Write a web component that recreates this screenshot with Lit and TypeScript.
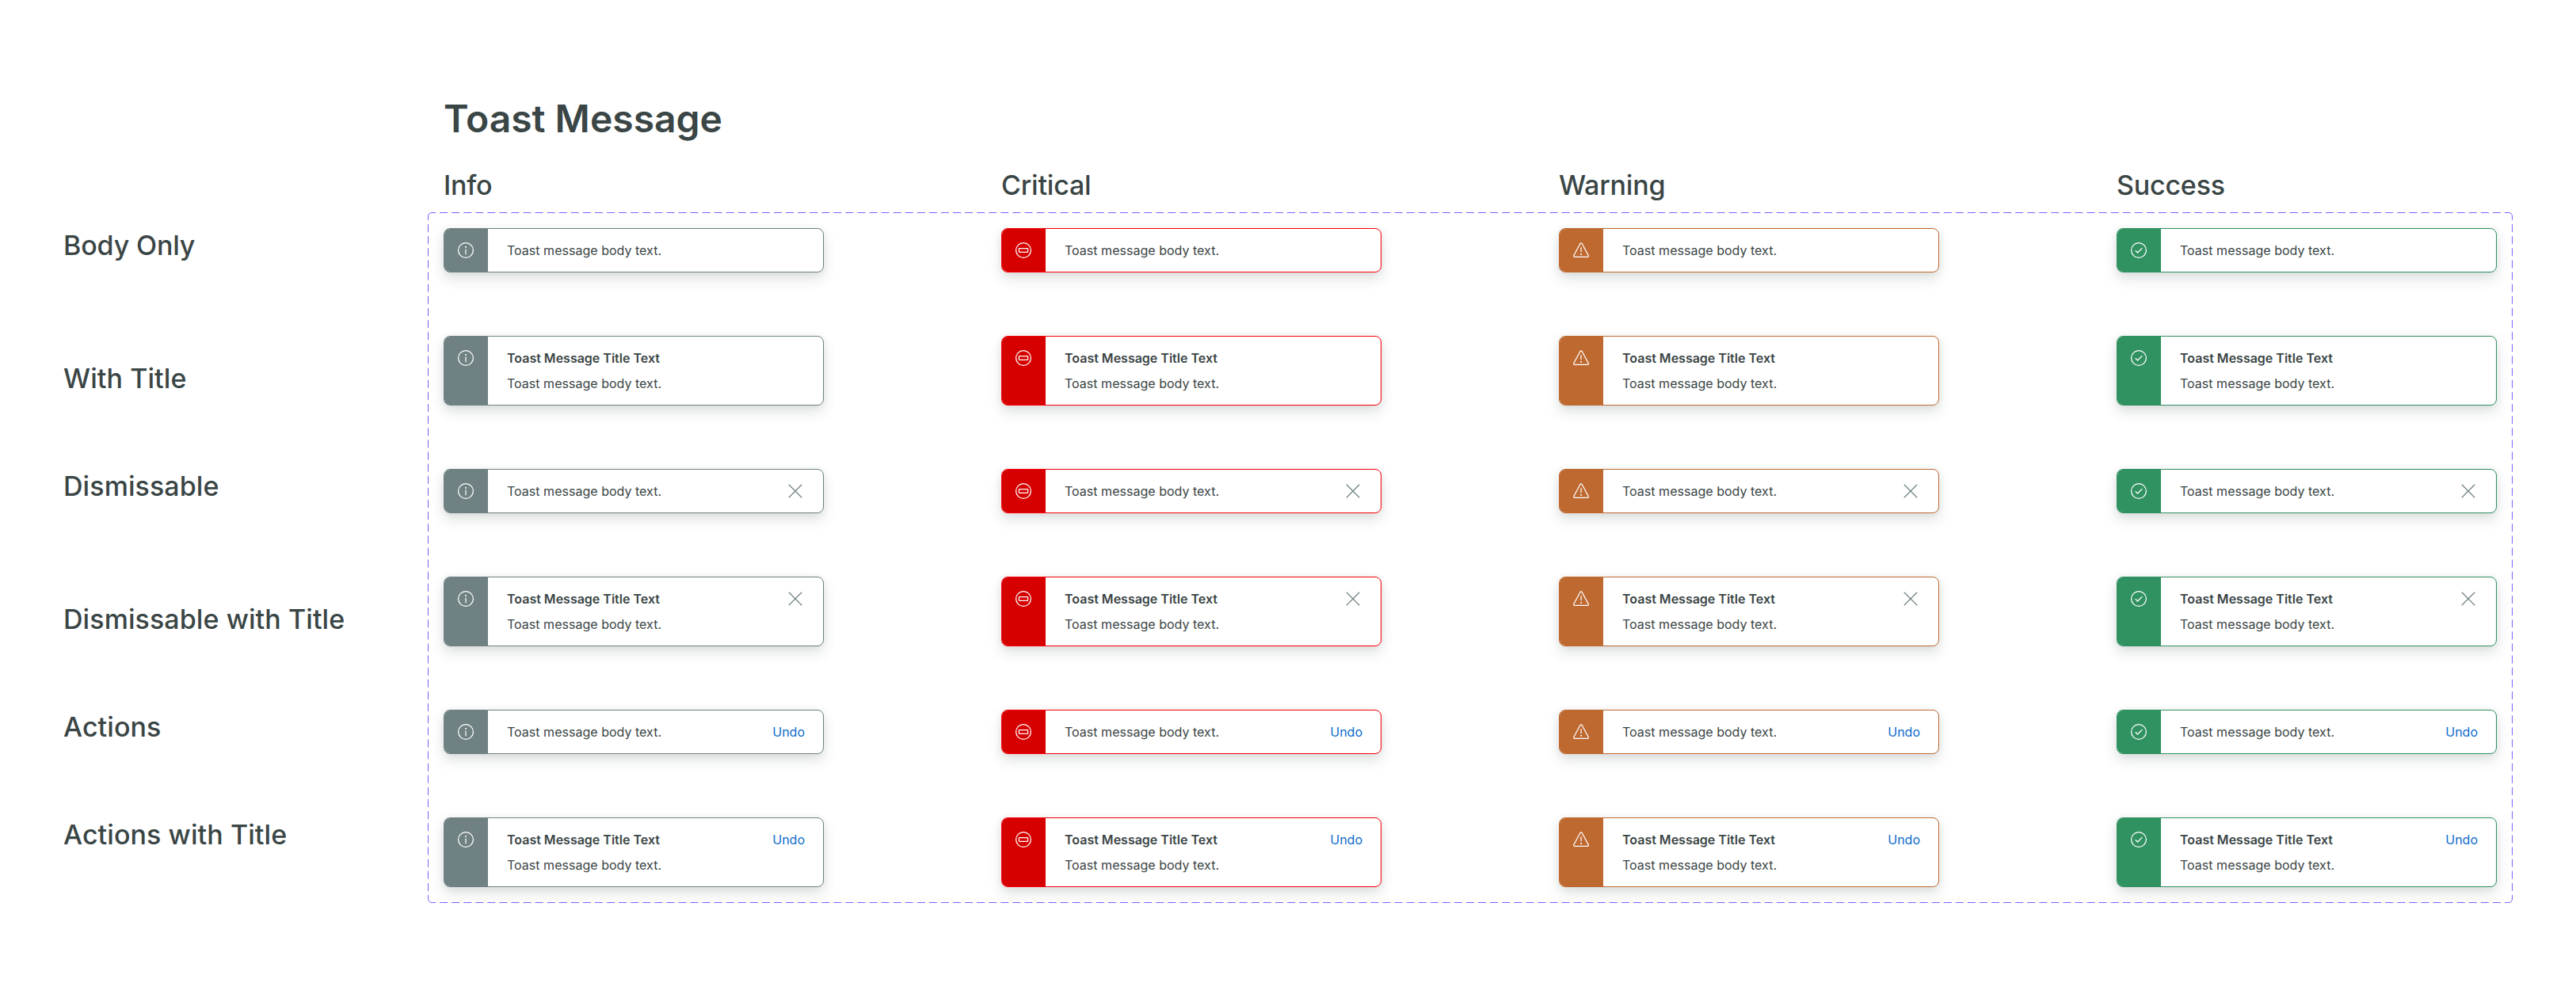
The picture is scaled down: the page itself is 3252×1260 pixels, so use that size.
import { LitElement, html, css, svg, nothing } from "lit";
import { customElement, property } from "lit/decorators.js";

type Kind = "info" | "critical" | "warning" | "success";

const icons = {
  info: svg`<circle cx="10" cy="10" r="9.4"/><path d="M10 8.4V15.2"/><path d="M10 5.1v1.7" stroke-width="1.8"/>`,
  critical: svg`<circle cx="10" cy="10" r="9.4"/><rect x="4.4" y="7.7" width="11.2" height="4.6" rx="0.5"/>`,
  warning: svg`<path d="M8.9 1.5Q10 .1 11.1 1.5L19.2 16.4Q19.7 18.1 18.2 18.4H1.8Q.3 18.1 .8 16.4Z"/><path d="M10 6.2V12.2"/><path d="M10 13.9v1.8" stroke-width="1.8"/>`,
  success: svg`<circle cx="10" cy="10" r="9.4"/><path d="M5.7 10.2 8.6 13 14.4 7.1"/>`,
};

@customElement("toast-message")
export class ToastMessage extends LitElement {
  @property() kind: Kind = "info";
  @property({ type: Boolean }) titled = false;
  @property() control = "";

  static styles = css`
    :host { display: block; }
    .toast {
      display: flex; box-sizing: border-box; width: 480px; min-height: 56px;
      border: 1px solid; border-radius: 8px; background: #fff; overflow: hidden;
      box-shadow: 0 8px 16px rgba(58, 69, 69, 0.16), 0 0 8px rgba(58, 69, 69, 0.06);
      font: 400 16px/24px Inter, sans-serif; color: #3a4545;
    }
    .flag { width: 55px; box-sizing: border-box; padding: 17px 0 0 17px; }
    .info { border-color: #6f8182; }
    .info .flag { background: #6f8182; }
    .critical { border-color: #f8000a; }
    .critical .flag { background: #d60000; }
    .warning { border-color: #be6930; }
    .warning .flag { background: #be6930; }
    .success { border-color: #309161; }
    .success .flag { background: #309161; }
    svg { display: block; fill: none; stroke: #fff; stroke-width: 1.25; overflow: visible; }
    .content { flex: 1; display: flex; flex-direction: column; gap: 8px; padding: 15px 0 15px 24px; }
    .heading { font-weight: 600; }
    .body { letter-spacing: 0.02px; }
    .side { padding: 15px 23px 0 0; }
    .undo { color: #0c6bcc; }
    .close { padding: 4px 4px; }
    .close svg { stroke: #6f8182; }
  `;

  render() {
    return html`<div class="toast ${this.kind}">
      <div class="flag"><svg width="20" height="20" viewBox="0 0 20 20">${icons[this.kind]}</svg></div>
      <div class="content">
        ${this.titled ? html`<div class="heading">Toast Message Title Text</div>` : nothing}
        <div class="body">Toast message body text.</div>
      </div>
      <div class="side">
        ${this.control === "undo" ? html`<div class="undo">Undo</div>` : nothing}
        ${this.control === "close"
          ? html`<div class="close"><svg width="16" height="16"><path d="M-.2 -.2 16.2 16.2M16.2 -.2-.2 16.2"/></svg></div>`
          : nothing}
      </div>
    </div>`;
  }
}

const W = 2632;
const H = 872;

@customElement("app-root")
export class AppRoot extends LitElement {
  static styles = css`
    :host { display: block; }
    .page {
      box-sizing: border-box; width: 3252px; height: 1260px; overflow: hidden; background: #fff;
      padding: 121px 80px 0; display: grid; grid-template-columns: 460px 2632px;
      grid-template-rows: 58px 89px 872px; color: #3a4545;
      font: 500 34px/42px Inter, sans-serif;
    }
    .name { grid-column: 2; padding-left: 20px; font-size: 48px; line-height: 58px; font-weight: 600; }
    .kinds { grid-column: 2; display: grid; grid-template-columns: repeat(4, 704px); padding: 34px 0 0 20px; width: 2612px; box-sizing: border-box; letter-spacing: -0.2px; }
    .rows { grid-column: 1; padding-top: 21px; display: flex; flex-direction: column; letter-spacing: 0.08px; }
    .row { height: 136px; flex: none; }
    .row.tall { height: 168px; }
    .row:first-child { letter-spacing: -0.15px; }
    .set { grid-column: 2; position: relative; padding: 20px; display: grid; grid-template-columns: repeat(4, 480px); gap: 80px 224px; align-content: start; box-sizing: border-box; }
    .frame { position: absolute; inset: 0; fill: none; stroke: #7b61ff; }
  `;

  render() {
    const kinds: Kind[] = ["info", "critical", "warning", "success"];
    const rows = [
      { label: "Body Only", titled: false, control: "", tall: true },
      { label: "With Title", titled: true, control: "", tall: false },
      { label: "Dismissable", titled: false, control: "close", tall: true },
      { label: "Dismissable with Title", titled: true, control: "close", tall: false },
      { label: "Actions", titled: false, control: "undo", tall: false },
      { label: "Actions with Title", titled: true, control: "undo", tall: false },
    ];
    const r = W - 0.5;
    const b = H - 0.5;
    const hGap = (W - 10) / 174 - 10;
    const vGap = (H - 10) / 57 - 10;
    return html`<div class="page">
      <div class="name">Toast Message</div>
      <div class="kinds"><span>Info</span><span>Critical</span><span>Warning</span><span>Success</span></div>
      <div class="rows">${rows.map((x) => html`<div class="row ${x.tall ? "tall" : ""}">${x.label}</div>`)}</div>
      <div class="set">
        <svg class="frame" width=${W} height=${H}>
          <path d="M.5 10V5A4.5 4.5 0 0 1 5 .5H10M${W - 10} .5H${W - 5}A4.5 4.5 0 0 1 ${r} 5V10M${r} ${H - 10}V${H - 5}A4.5 4.5 0 0 1 ${W - 5} ${b}H${W - 10}M10 ${b}H5A4.5 4.5 0 0 1 .5 ${H - 5}V${H - 10}"/>
          <path stroke-dasharray="10 ${hGap}" d="M${10 + hGap} .5H${W - 10 - hGap}M${10 + hGap} ${b}H${W - 10 - hGap}"/>
          <path stroke-dasharray="10 ${vGap}" d="M.5 ${10 + vGap}V${H - 10 - vGap}M${r} ${10 + vGap}V${H - 10 - vGap}"/>
        </svg>
        ${rows.map((x) => kinds.map((k) => html`<toast-message .kind=${k} .titled=${x.titled} .control=${x.control}></toast-message>`))}
      </div>
    </div>`;
  }
}
